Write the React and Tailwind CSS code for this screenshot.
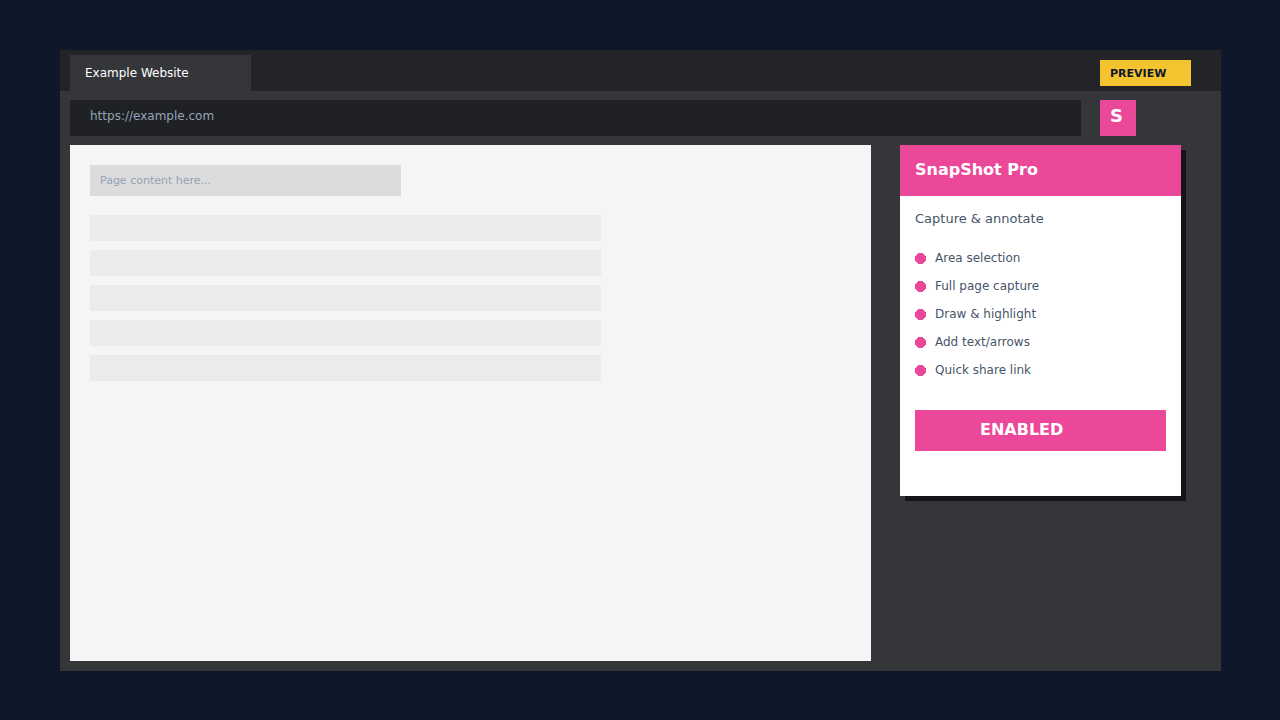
const features = [
    'Area selection',
    'Full page capture',
    'Draw & highlight',
    'Add text/arrows',
    'Quick share link',
];

function TabBar() {
    return (
        <header className="flex justify-between bg-[#232427] pt-[5px] pl-[10px] pr-[30px]">
            <button type="button" className="w-[181px] h-[36px] pl-[15px] text-left text-[12px] leading-[16px] text-white bg-[#35363a]">
                Example Website
            </button>
            <span className="w-[91px] h-[26px] mt-[5px] pl-[10px] pt-[6px] text-[11px] leading-[16px] font-bold text-[#0f172a] bg-[#f4c430]">
                PREVIEW
            </span>
        </header>
    );
}

function AddressBar() {
    return (
        <div className="flex gap-[19px] pt-[9px] pl-[10px] pr-[85px]">
            <input
                type="text"
                aria-label="Address"
                defaultValue="https://example.com"
                className="flex-1 min-w-0 h-[36px] pl-[20px] pb-[4px] text-[12px] leading-[16px] text-[#94a3b8] bg-[#202124] outline-none"
            />
            <button type="button" aria-label="SnapShot Pro" className="w-[36px] h-[36px] pl-[10px] pb-[4px] text-left text-[18px] leading-[24px] font-bold text-white bg-[#ec4899]">
                S
            </button>
        </div>
    );
}

function PageContent() {
    return (
        <main className="flex-1 min-w-0 bg-[#f5f5f5] p-[20px]">
            <p className="w-[311px] max-w-full h-[31px] pl-[10px] text-[11px] leading-[31px] text-[#94a3b8] bg-[#dcdcdc]">
                Page content here...
            </p>
            <div className="mt-[19px] space-y-[9px]">
                {[1, 2, 3, 4, 5].map((n) => (
                    <div key={n} className="w-[511px] max-w-full h-[26px] bg-[#ebebeb]" />
                ))}
            </div>
        </main>
    );
}

function ExtensionPopup() {
    return (
        <aside className="w-[281px] shrink-0 self-start bg-white pb-[45px] shadow-[5px_5px_0_#141418]">
            <h1 className="h-[51px] pl-[15px] text-[16px] leading-[49px] font-bold text-white bg-[#ec4899]">SnapShot Pro</h1>
            <div className="px-[15px] pt-[15px]">
                <p className="text-[13px] leading-[16px] text-[#475569]">Capture & annotate</p>
                <ul className="mt-[17px]">
                    {features.map((feature) => (
                        <li key={feature} className="flex items-center gap-[9px] h-[28px] text-[12px] leading-[16px] text-[#475569]">
                            <svg width="11" height="11" viewBox="0 0 11 11" fill="#ec4899" shapeRendering="crispEdges" aria-hidden="true">
                                <path d="M3 0h5v1h1v1h1v1h1v5h-1v1h-1v1h-1v1h-5v-1h-1v-1h-1v-1h-1v-5h1v-1h1v-1h1z" />
                            </svg>
                            {feature}
                        </li>
                    ))}
                </ul>
                <button type="button" className="mt-[26px] w-full h-[41px] pl-[65px] pb-[2px] text-left text-[16px] leading-[20px] font-bold text-white bg-[#ec4899]">
                    ENABLED
                </button>
            </div>
        </aside>
    );
}

export default function App() {
    return (
        <div className="flex flex-col min-h-screen bg-[#0f172a] pt-[50px] pb-[49px] pl-[60px] pr-[59px] font-['DejaVu_Sans',sans-serif]">
            <div className="flex-1 flex flex-col bg-[#35363a]">
                <TabBar />
                <AddressBar />
                <div className="flex-1 flex gap-[29px] pt-[9px] pb-[10px] pl-[10px] pr-[40px]">
                    <PageContent />
                    <ExtensionPopup />
                </div>
            </div>
        </div>
    );
}
